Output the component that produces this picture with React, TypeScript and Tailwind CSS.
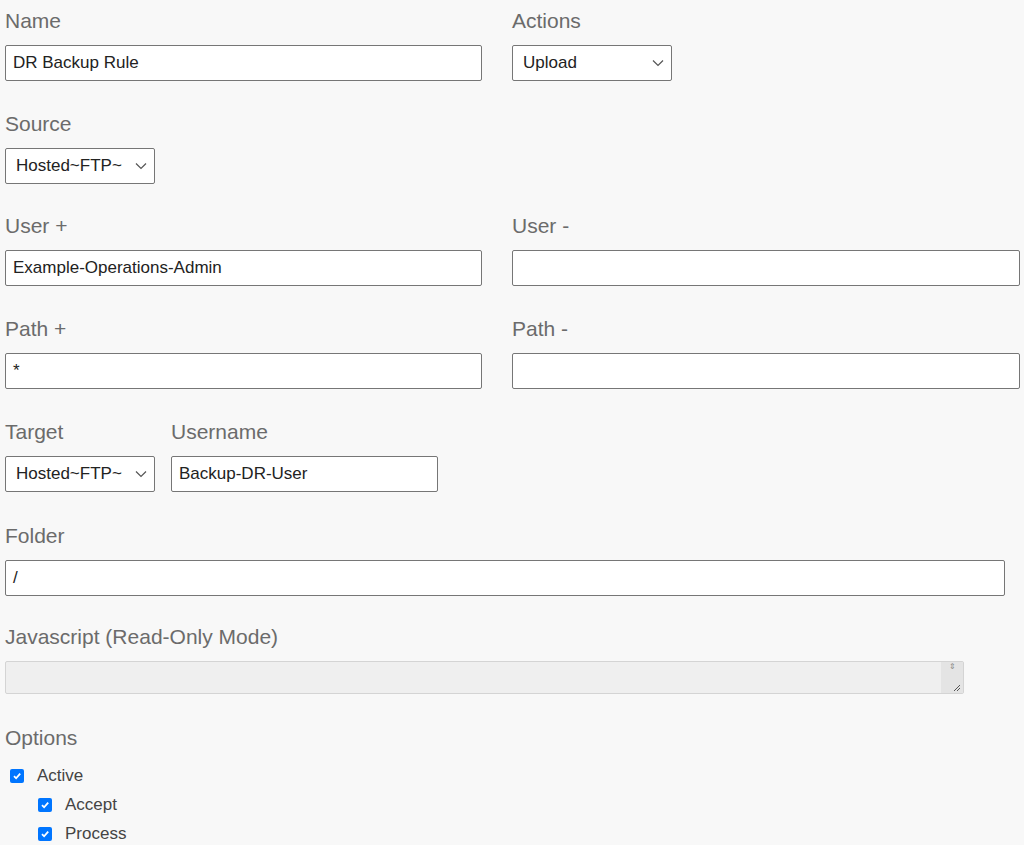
const font = { fontFamily: 'Arial, "Liberation Sans", sans-serif' };

const Label = ({ children }: { children: React.ReactNode }) => (
    <div className="text-[21px] leading-[30px] text-[#6b6b6b]">{children}</div>
);

const TextBox = ({ value, w }: { value: string; w: string }) => (
    <div className={`mt-[9px] h-[36px] ${w} rounded-[2px] border border-[#767676] bg-white px-[7px] text-[17px] leading-[34px] text-[#222]`}>
        {value}
    </div>
);

const Chevron = () => (
    <svg width="12" height="8" viewBox="0 0 12 8" className="text-[#555]">
        <path d="M1 1.5 L6 6.5 L11 1.5" fill="none" stroke="currentColor" strokeWidth="1.2" />
    </svg>
);

const SelectBox = ({ value, w }: { value: string; w: string }) => (
    <div className={`mt-[9px] flex h-[36px] ${w} items-center justify-between rounded-[2px] border border-[#767676] bg-white pl-[10px] pr-[7px] text-[17px] text-[#222]`}>
        <span>{value}</span>
        <Chevron />
    </div>
);

const Check = ({ label, indent }: { label: string; indent?: boolean }) => (
    <div className={`flex h-[29px] items-center ${indent ? 'pl-[33px]' : 'pl-[5px]'}`}>
        <span className="flex h-[14px] w-[14px] items-center justify-center rounded-[2px] bg-[#0075ff]">
            <svg width="10" height="10" viewBox="0 0 10 10">
                <path d="M2 5.2 L4.1 7.3 L8.2 2.6" fill="none" stroke="white" strokeWidth="1.8" />
            </svg>
        </span>
        <span className="ml-[13px] text-[17px] text-[#444]">{label}</span>
    </div>
);

export default function App() {
    return (
        <div className="min-h-[845px] bg-[#f8f8f8] pl-[5px] pt-[6px]" style={font}>
            <div className="flex gap-[30px]">
                <div>
                    <Label>Name</Label>
                    <TextBox value="DR Backup Rule" w="w-[477px]" />
                </div>
                <div>
                    <Label>Actions</Label>
                    <SelectBox value="Upload" w="w-[160px]" />
                </div>
            </div>

            <div className="mt-[28px]">
                <Label>Source</Label>
                <SelectBox value="Hosted~FTP~" w="w-[150px]" />
            </div>

            <div className="mt-[27px] flex gap-[30px]">
                <div>
                    <Label>User +</Label>
                    <TextBox value="Example-Operations-Admin" w="w-[477px]" />
                </div>
                <div>
                    <Label>User -</Label>
                    <TextBox value="" w="w-[508px]" />
                </div>
            </div>

            <div className="mt-[28px] flex gap-[30px]">
                <div>
                    <Label>Path +</Label>
                    <TextBox value="*" w="w-[477px]" />
                </div>
                <div>
                    <Label>Path -</Label>
                    <TextBox value="" w="w-[508px]" />
                </div>
            </div>

            <div className="mt-[28px] flex gap-[16px]">
                <div>
                    <Label>Target</Label>
                    <SelectBox value="Hosted~FTP~" w="w-[150px]" />
                </div>
                <div>
                    <Label>Username</Label>
                    <TextBox value="Backup-DR-User" w="w-[267px]" />
                </div>
            </div>

            <div className="mt-[29px]">
                <Label>Folder</Label>
                <TextBox value="/" w="w-[1000px]" />
            </div>

            <div className="mt-[26px]">
                <Label>Javascript (Read-Only Mode)</Label>
                <div className="relative mt-[9px] h-[33px] w-[959px] rounded-[2px] border border-[#d4d4d4] bg-[#efefef]">
                    <div className="absolute right-0 top-0 flex h-full w-[22px] flex-col items-center bg-[#e4e4e4]">
                        <span className="text-[8px] leading-[10px] text-[#888]">⇕</span>
                    </div>
                    <svg className="absolute bottom-[1px] right-[2px]" width="10" height="10" viewBox="0 0 10 10">
                        <path d="M9 3 L3 9 M9 6 L6 9" stroke="#555" strokeWidth="1" />
                    </svg>
                </div>
            </div>

            <div className="mt-[29px]">
                <Label>Options</Label>
                <div className="mt-[8px]">
                    <Check label="Active" />
                    <Check label="Accept" indent />
                    <Check label="Process" indent />
                </div>
            </div>
        </div>
    );
}
